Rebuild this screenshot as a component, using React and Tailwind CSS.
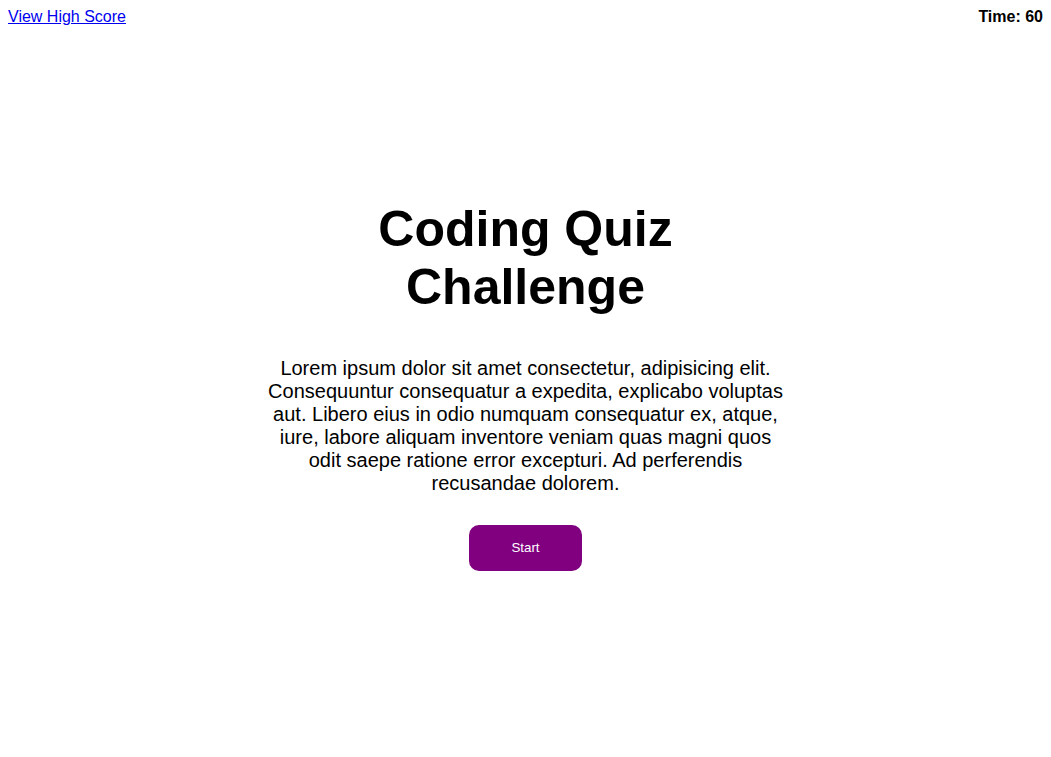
export default function App() {
  return (
    <div className="min-h-[757px] bg-white text-black" style={{ fontFamily: '"Liberation Sans", Arial, sans-serif' }}>
      <header className="flex justify-between items-start px-2 pt-[8px]">
        <a href="#" className="text-[16px] leading-[18px] text-[#0000ee] underline">View High Score</a>
        <div className="text-[16px] leading-[18px] font-bold">Time: 60</div>
      </header>
      <main className="flex flex-col items-center pt-[175px]">
        <h1 className="text-[50px] leading-[57.5px] font-bold text-center">
          Coding Quiz
          <br />
          Challenge
        </h1>
        <p className="mt-[41px] w-[520px] text-[20px] leading-[23px] text-center">
          Lorem ipsum dolor sit amet consectetur, adipisicing elit. Consequuntur consequatur a expedita, explicabo voluptas aut. Libero eius in odio numquam consequatur ex, atque, iure, labore aliquam inventore veniam quas magni quos odit saepe ratione error excepturi. Ad perferendis recusandae dolorem.
        </p>
        <button className="mt-[30px] w-[113px] h-[46px] rounded-[10px] bg-[#800080] text-white text-[13.33px]">
          Start
        </button>
      </main>
    </div>
  );
}
